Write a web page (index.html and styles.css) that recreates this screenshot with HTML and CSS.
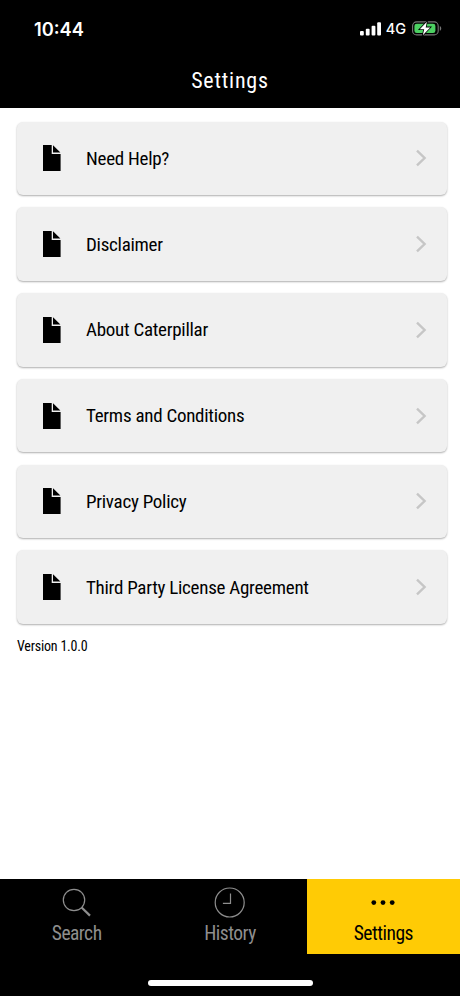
FILE: index.html
```html
<!DOCTYPE html>
<html lang="en">
<head>
    <meta charset="UTF-8">
    <meta name="viewport" content="width=device-width, initial-scale=1.0">
    <title>Settings</title>
    <link rel="stylesheet" href="styles.css">
</head>
<body>
    <svg width="0" height="0" class="symbols">
        <symbol id="doc" viewBox="0 0 18 26">
            <path d="M0 0H8.7V9H17.6V26H0Z"/>
            <path d="M10 0.3L17.4 7.6H10Z"/>
        </symbol>
        <symbol id="chevron" viewBox="0 0 12 18">
            <path d="M2 1.7L9.6 9L2 16.3" fill="none" stroke="#c6c6c6" stroke-width="2.4"/>
        </symbol>
    </svg>

    <header class="header">
        <div class="status-bar">
            <span class="time">10:44</span>
            <div class="status-icons">
                <svg class="signal" width="21" height="14" viewBox="0 0 21 14" fill="#fff">
                    <rect x="0" y="9" width="3.8" height="4.5" rx="1"/>
                    <rect x="5.8" y="6.7" width="3.8" height="6.8" rx="1"/>
                    <rect x="11.6" y="3.8" width="3.8" height="9.7" rx="1"/>
                    <rect x="17.2" y="0.3" width="3.8" height="13.2" rx="1"/>
                </svg>
                <span class="network">4G</span>
                <svg class="battery" width="30" height="15" viewBox="0 0 30 15">
                    <rect x="0.6" y="0.9" width="25.6" height="13" rx="4" fill="none" stroke="#777" stroke-width="1.1"/>
                    <rect x="2.4" y="2.7" width="21" height="9.4" rx="2.4" fill="#4cd062"/>
                    <path d="M27.8 5V9.8C29.7 9 29.7 5.8 27.8 5Z" fill="#777"/>
                    <path d="M14.9 0.8L7.8 8.2H12.2L10.8 14.2L18.2 6.4H13.7Z" fill="#fff" stroke="#000" stroke-width="1.6" paint-order="stroke"/>
                </svg>
            </div>
        </div>
        <h1>Settings</h1>
    </header>

    <main class="content">
        <ul class="menu">
            <li class="menu-item">
                <svg class="doc"><use href="#doc"/></svg>
                <span class="label">Need Help?</span>
                <svg class="chevron"><use href="#chevron"/></svg>
            </li>
            <li class="menu-item">
                <svg class="doc"><use href="#doc"/></svg>
                <span class="label">Disclaimer</span>
                <svg class="chevron"><use href="#chevron"/></svg>
            </li>
            <li class="menu-item">
                <svg class="doc"><use href="#doc"/></svg>
                <span class="label">About Caterpillar</span>
                <svg class="chevron"><use href="#chevron"/></svg>
            </li>
            <li class="menu-item">
                <svg class="doc"><use href="#doc"/></svg>
                <span class="label">Terms and Conditions</span>
                <svg class="chevron"><use href="#chevron"/></svg>
            </li>
            <li class="menu-item">
                <svg class="doc"><use href="#doc"/></svg>
                <span class="label">Privacy Policy</span>
                <svg class="chevron"><use href="#chevron"/></svg>
            </li>
            <li class="menu-item">
                <svg class="doc"><use href="#doc"/></svg>
                <span class="label">Third Party License Agreement</span>
                <svg class="chevron"><use href="#chevron"/></svg>
            </li>
        </ul>
        <p class="version">Version 1.0.0</p>
    </main>

    <footer class="footer">
        <nav class="tabs">
            <a class="tab">
                <svg width="32" height="32" viewBox="0 0 32 32" fill="none" stroke="#8e8e8e">
                    <circle cx="13" cy="13" r="10.7" stroke-width="1.2"/>
                    <path d="M20.6 20.5L29 28.6" stroke-width="2.2"/>
                </svg>
                <span>Search</span>
            </a>
            <a class="tab">
                <svg width="32" height="32" viewBox="0 0 32 32" fill="none" stroke="#8e8e8e" stroke-width="1.2">
                    <circle cx="15.7" cy="15.5" r="14.5"/>
                    <path d="M16.5 6.5V16.3H8.9"/>
                </svg>
                <span>History</span>
            </a>
            <a class="tab active">
                <svg width="32" height="32" viewBox="0 0 32 32" fill="#000">
                    <circle cx="6.8" cy="15.6" r="2.4"/>
                    <circle cx="16" cy="15.6" r="2.4"/>
                    <circle cx="25.2" cy="15.6" r="2.4"/>
                </svg>
                <span>Settings</span>
            </a>
        </nav>
        <div class="home-indicator"></div>
    </footer>
</body>
</html>
```

FILE: styles.css
```css
* {
    box-sizing: border-box;
}
body {
    margin: 0;
    height: 996px;
    display: flex;
    flex-direction: column;
    background: #fff;
    color: #000;
    font-family: "Roboto Condensed", Roboto, sans-serif;
    font-stretch: 75%;
}
.symbols {
    display: none;
}
.header {
    height: 108px;
    background: #000;
    color: #fff;
}
.status-bar {
    height: 57px;
    padding: 0 18px 0 34px;
    display: flex;
    align-items: center;
    justify-content: space-between;
    font-family: Inter, sans-serif;
    font-stretch: 100%;
}
.time {
    font-size: 18.3px;
    font-weight: 600;
}
.status-icons {
    display: flex;
    align-items: center;
}
.network {
    margin: 0 6px 0 5px;
    font-size: 14.5px;
    font-weight: 500;
}
h1 {
    margin: 0;
    line-height: 47px;
    text-align: center;
    font-size: 22px;
    font-weight: 400;
    letter-spacing: 0.8px;
}
.content {
    flex: 1;
    padding: 13.5px 13px 0 17px;
}
.menu {
    margin: 0;
    padding: 0;
    list-style: none;
    display: flex;
    flex-direction: column;
    gap: 12.3px;
}
.menu-item {
    height: 73.5px;
    padding: 0 20px 0 26px;
    display: flex;
    align-items: center;
    background: #f0f0f0;
    border-radius: 6px;
    box-shadow: 0 1px 2px rgba(0, 0, 0, 0.32);
}
.doc {
    width: 18px;
    height: 26px;
}
.label {
    flex: 1;
    margin-left: 25px;
    font-size: 19px;
    letter-spacing: -0.27px;
}
.chevron {
    width: 12px;
    height: 18px;
}
.version {
    margin: 13px 0 0;
    font-size: 14px;
    line-height: 18px;
    letter-spacing: -0.2px;
}
.footer {
    height: 117px;
    background: #000;
}
.tabs {
    display: flex;
    height: 75px;
}
.tab {
    flex: 1;
    display: flex;
    flex-direction: column;
    align-items: center;
    padding-top: 8px;
    color: #8e8e8e;
    font-size: 19.5px;
    line-height: 30px;
    letter-spacing: -0.5px;
}
.tab.active {
    background: #ffcb05;
    color: #000;
}
.home-indicator {
    width: 165px;
    height: 6px;
    margin: 26px auto 0;
    background: #fff;
    border-radius: 3px;
}
```
